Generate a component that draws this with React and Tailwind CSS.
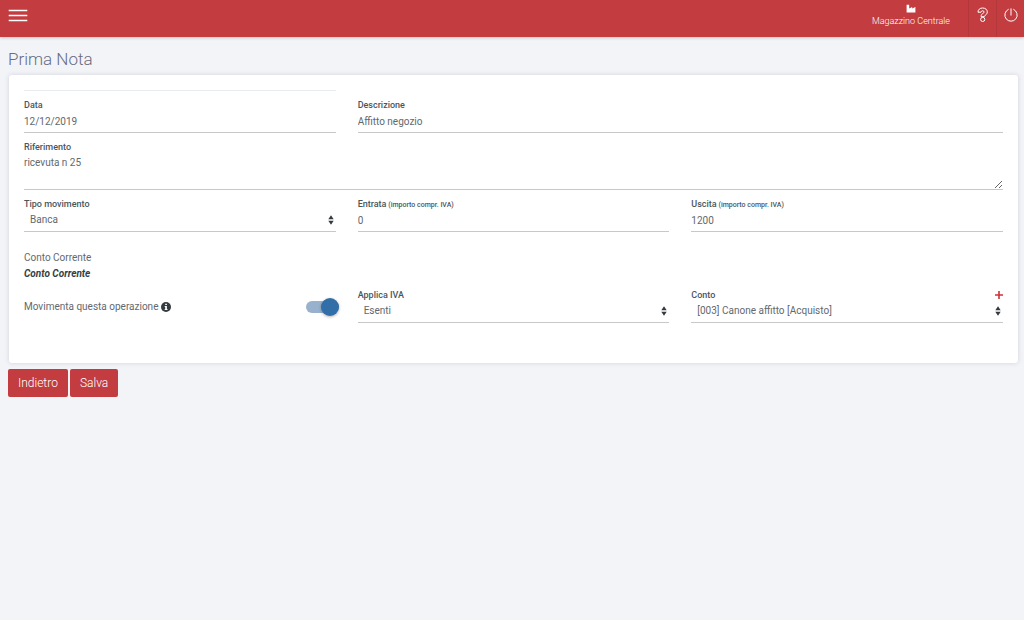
import { useState } from 'react';

const controlClass =
  'block w-full appearance-none rounded-none border-0 border-b border-[#c8c8c8] bg-transparent text-[10px] text-[#62696e] outline-none';

const Label = ({ htmlFor, hint, children }) => (
  <label htmlFor={htmlFor} className="block text-[9px] leading-3 font-medium text-[#4a565c]">
    {children}
    {hint && <span className="text-[7px] leading-none"> {hint}</span>}
  </label>
);

const TextField = ({ id, label, hint, defaultValue }) => (
  <div>
    <Label htmlFor={id} hint={hint}>{label}</Label>
    <input id={id} type="text" defaultValue={defaultValue} className={`${controlClass} h-[22px]`} />
  </div>
);

const SelectField = ({ id, label, options, action }) => (
  <div>
    <div className="flex items-center justify-between">
      <Label htmlFor={id}>{label}</Label>
      {action}
    </div>
    <div className="relative">
      <select id={id} className={`${controlClass} h-[22px] pr-5 pb-[2px] pl-[6px]`}>
        {options.map((option) => (
          <option key={option}>{option}</option>
        ))}
      </select>
      <svg
        viewBox="0 0 6 10"
        className="pointer-events-none absolute top-[5px] right-[2px] h-[10px] w-[6px]"
        fill="#343a40"
        aria-hidden="true"
      >
        <path d="M3 0.300 5.700 4.200H.3zM3 9.700.3 5.800h5.400z" />
      </svg>
    </div>
  </div>
);

const Header = () => (
  <header className="flex h-[37px] items-stretch justify-between bg-[#c23c40] text-white shadow-[0_1px_3px_rgba(0,0,0,0.2)]">
    <button type="button" aria-label="Menu" className="flex items-start px-2 pt-[9px]">
      <svg viewBox="0 0 20 13" className="h-[13px] w-5" stroke="currentColor" strokeWidth="1.4" aria-hidden="true">
        <path d="M.7 1.500h18.600M.7 6.500h18.600M.7 11.500h18.600" />
      </svg>
    </button>
    <div className="flex">
      <a href="#magazzino" className="flex flex-col items-center px-[18px] pt-1 text-[9px] font-light">
        <svg viewBox="0 0 10 9" className="h-[9px] w-[10px]" fill="currentColor" aria-hidden="true">
          <path d="M.6.8h2.600v3.800L6.200 3v1.600L9.400 3v5.600H.6z" />
        </svg>
        <span className="mt-[2px] leading-3">Magazzino Centrale</span>
      </a>
      <button
        type="button"
        aria-label="Aiuto"
        className="flex w-7 items-start justify-center border-l border-[#b3373b] pt-[7px]"
      >
        <svg viewBox="0 0 12 16" className="h-4 w-3" fill="none" stroke="currentColor" aria-hidden="true">
          <path d="M1 5.200C.9 2.700 2.900 1 5.600 1s4.700 1.600 4.700 3.900c0 2-1.200 2.900-2.400 3.600-.6.4-.6.6-.6 1.200H4.100c0-1.900.6-2.600 1.800-3.300.8-.5 1.200-.8 1.200-1.400 0-.8-.6-1.200-1.500-1.200S4.200 4.300 4.100 5.200z" />
          <circle cx="5.700" cy="12.400" r="2.100" />
        </svg>
      </button>
      <button
        type="button"
        aria-label="Esci"
        className="flex w-7 items-start justify-center border-l border-[#b3373b] pt-2"
      >
        <svg viewBox="0 0 14 14" className="h-[14px] w-[14px]" fill="none" stroke="currentColor" strokeLinecap="round" aria-hidden="true">
          <path d="M7 .8v6.400M4.300 1.400a6.200 6.200 0 1 0 5.400 0" />
        </svg>
      </button>
    </div>
  </header>
);

const Toggle = () => {
  const [enabled, setEnabled] = useState(true);

  return (
    <div className="flex items-center justify-between pt-1 pb-[3px]">
      <label htmlFor="movimenta" className="flex items-center gap-[3px] text-[10px] text-[#62696e]">
        Movimenta questa operazione
        <svg viewBox="0 0 10 10" className="h-[10px] w-[10px]" aria-hidden="true">
          <circle cx="5" cy="5" r="5" fill="#343a40" />
          <path d="M4.200 1.700h1.700v1.400H4.200zM3.700 4h2.200v3h.6v1H3.700V7h.5V5h-.5z" fill="#fff" />
        </svg>
      </label>
      <span className="relative -mr-[3px] flex h-[18px] w-[33px] items-center">
        <input
          id="movimenta"
          type="checkbox"
          checked={enabled}
          onChange={(e) => setEnabled(e.target.checked)}
          className="peer h-3 w-full appearance-none rounded-full bg-[#bbb] checked:bg-[#98b2cd]"
        />
        <span className="pointer-events-none absolute left-0 h-[18px] w-[18px] rounded-full bg-white shadow-[0_1px_3px_rgba(0,0,0,0.3)] peer-checked:right-0 peer-checked:left-auto peer-checked:bg-[#326ea8]" />
      </span>
    </div>
  );
};

const AddButton = () => (
  <button type="button" aria-label="Aggiungi conto" className="text-[#cc3338]">
    <svg viewBox="0 0 8 8" className="h-2 w-2" stroke="currentColor" strokeWidth="1.600" aria-hidden="true">
      <path d="M4 0v8M0 4h8" />
    </svg>
  </button>
);

export default function App() {
  return (
    <div className="min-h-screen bg-[#f3f4f8] font-[Roboto,sans-serif]">
      <Header />
      <main className="pt-3 pr-[6px] pl-2">
        <h1 className="text-[17px] leading-5 font-light text-[#686c7e]">Prima Nota</h1>
        <form onSubmit={(e) => e.preventDefault()}>
          <div className="mt-[6px] ml-px rounded-[3px] bg-white px-[15px] pt-[15px] pb-10 shadow-[0_0_5px_rgba(60,70,100,0.18)]">
            <div className="grid grid-cols-3 gap-x-[22px] gap-y-2">
              <div className="border-t border-[#e9ecef] pt-2">
                <TextField id="data" label="Data" defaultValue="12/12/2019" />
              </div>
              <div className="col-span-2 pt-[9px]">
                <TextField id="descrizione" label="Descrizione" defaultValue="Affitto negozio" />
              </div>
              <div className="col-span-3">
                <Label htmlFor="riferimento">Riferimento</Label>
                <textarea
                  id="riferimento"
                  defaultValue="ricevuta n 25"
                  className={`${controlClass} h-[37px] resize-y pt-[2px] leading-4`}
                />
              </div>
              <SelectField id="tipo" label="Tipo movimento" options={['Banca', 'Cassa']} />
              <TextField id="entrata" label="Entrata" hint="(importo compr. IVA)" defaultValue="0" />
              <TextField id="uscita" label="Uscita" hint="(importo compr. IVA)" defaultValue="1200" />
            </div>
            <div className="mt-[18px] text-[10px] leading-4">
              <p className="text-[#62696e]">Conto Corrente</p>
              <p className="font-bold text-[#343f45] italic">Conto Corrente</p>
            </div>
            <div className="mt-[7px] grid grid-cols-3 gap-x-[22px]">
              <Toggle />
              <SelectField id="iva" label="Applica IVA" options={['Esenti', 'Imponibili']} />
              <SelectField
                id="conto"
                label="Conto"
                options={['[003] Canone affitto [Acquisto]']}
                action={<AddButton />}
              />
            </div>
          </div>
          <div className="mt-[6px] flex gap-[2px] text-[12px] font-light text-white">
            <button type="button" className="h-7 rounded-[2px] bg-[#c23c40] px-[10px]">Indietro</button>
            <button type="submit" className="h-7 rounded-[2px] bg-[#c23c40] px-[10px]">Salva</button>
          </div>
        </form>
      </main>
    </div>
  );
}
